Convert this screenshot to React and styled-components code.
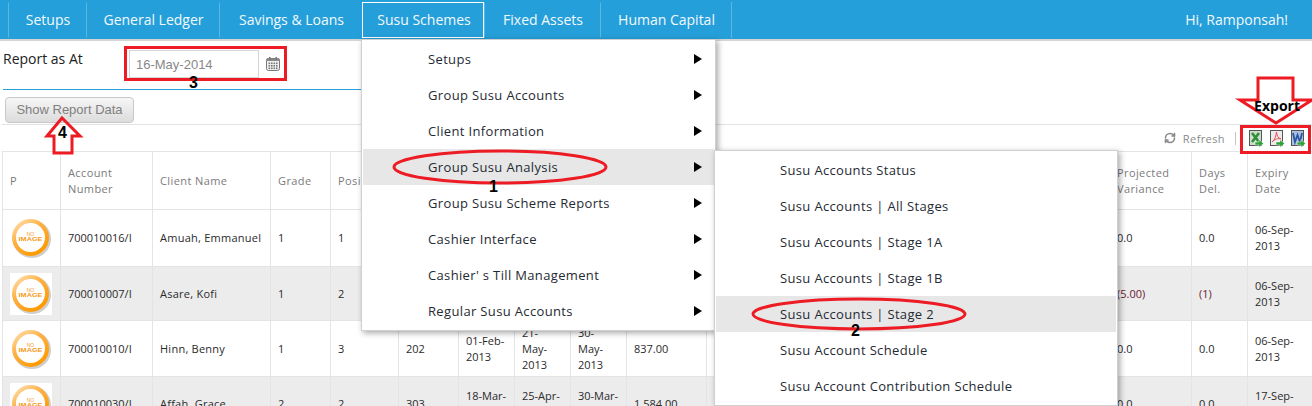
// Susu report page with the scheme menu open and red annotations on top
import React from "react";
import styled, { createGlobalStyle } from "styled-components";
import { RefreshCw } from "lucide-react";

const GlobalStyle = createGlobalStyle`
    html, body {
        margin: 0;
        padding: 0;
        background: #fff;
        overflow: hidden;
    }
    body {
        font-family: "Open Sans", "Liberation Sans", sans-serif;
    }
`;

const Page = styled.div`
    position: relative;
    width: 1312px;
    height: 406px;
    overflow: hidden;
`;

const TopBar = styled.div`
    height: 39px;
    padding-left: 8px;
    background: #259fda;
    border-bottom: 2px solid #d4d4d4;
    display: flex;
    align-items: center;
    justify-content: space-between;
    color: #f2f9fd;
    font-size: 14px;
    font-weight: 500;
`;

const NavList = styled.div`
    display: flex;
    height: 36px;
    border-right: 1px solid #5cb6e3;
`;

const NavItem = styled.div`
    box-sizing: border-box;
    width: ${(p) => p.$width}px;
    padding-left: 2px;
    display: flex;
    align-items: center;
    justify-content: center;
    border-left: 1px solid ${(p) => (p.$active ? "#fff" : "#5cb6e3")};
    border-top: 1px solid ${(p) => (p.$active ? "#fff" : "transparent")};
    border-bottom: 1px solid ${(p) => (p.$active ? "#fff" : "transparent")};
    border-right: 1px solid ${(p) => (p.$active ? "#fff" : "transparent")};
`;

const Greeting = styled.div`
    margin-right: 24px;
`;

const FilterRow = styled.div`
    height: 48px;
    padding-left: 3px;
    display: flex;
    color: #222;
    font-size: 14px;
`;

const FilterLabel = styled.div`
    width: 126px;
    padding-top: 8px;
`;

const DateBox = styled.div`
    display: flex;
    align-items: center;
    gap: 6px;
    height: 28px;
    margin-top: 9px;
`;

const DateInput = styled.div`
    box-sizing: border-box;
    width: 130px;
    height: 28px;
    padding: 2px 0 0 6px;
    border: 1px solid #d5d5d5;
    color: #888;
    font-family: "Liberation Sans", sans-serif;
    font-size: 13px;
    line-height: 24px;
`;

const Divider = styled.div`
    width: 360px;
    height: 1px;
    margin-left: 3px;
    background: #259fda;
`;

const ActionRow = styled.div`
    height: 34px;
    padding: 7px 12px 0 5px;
    box-sizing: border-box;
    display: flex;
    justify-content: space-between;
`;

const ReportButton = styled.div`
    box-sizing: border-box;
    width: 129px;
    height: 26px;
    border: 1px solid #c8c8c8;
    border-radius: 4px;
    background: linear-gradient(#f6f6f6, #dcdcdc);
    color: #808080;
    font-family: "Liberation Sans", sans-serif;
    font-size: 13px;
    line-height: 24px;
    text-align: center;
`;

const ExportLabel = styled.div`
    position: relative;
    z-index: 4;
    color: #000;
    font-size: 14px;
    font-weight: 700;
    line-height: 18px;
`;

const GridToolbar = styled.div`
    box-sizing: border-box;
    height: 27px;
    margin-left: 2px;
    padding-right: 6px;
    border-top: 1px solid #e2e2e2;
    display: flex;
    align-items: center;
    justify-content: flex-end;
    color: #8a8a8a;
    font-size: 11px;
`;

const RefreshText = styled.span`
    margin-left: 7px;
    letter-spacing: 0.4px;
`;

const ToolbarBar = styled.span`
    width: 1px;
    height: 13px;
    margin: 0 13px 0 10px;
    background: #c5c5c5;
`;

const ExportIcons = styled.div`
    display: flex;
    gap: 6px;
    padding-top: 2px;
`;

const GridTable = styled.table`
    width: 1310px;
    margin-left: 2px;
    table-layout: fixed;
    border-collapse: collapse;
    font-size: 11px;
`;

const HeadCell = styled.th`
    height: 57px;
    padding: 0 6px 0 7px;
    border: 1px solid #e4e4e4;
    color: #7b7b7b;
    font-weight: 400;
    letter-spacing: 0.4px;
    line-height: 16px;
    text-align: left;
`;

const Row = styled.tr`
    height: ${(p) => p.$height}px;
    background: ${(p) => (p.$striped ? "#ececec" : "#fff")};
`;

const Cell = styled.td`
    padding: 0 6px 0 7px;
    border-left: 1px solid #e4e4e4;
    border-right: 1px solid #e4e4e4;
    border-bottom: 1px solid #e4e4e4;
    color: ${(p) => (p.$negative ? "#6b2030" : "#2a2a2a")};
    letter-spacing: ${(p) => (p.$name ? "0.25px" : "0")};
    white-space: ${(p) => (p.$name ? "nowrap" : "pre-line")};
    line-height: 16px;
    overflow: hidden;
`;

const Menu = styled.div`
    position: absolute;
    z-index: 2;
    left: ${(p) => p.$left}px;
    top: ${(p) => p.$top}px;
    box-sizing: border-box;
    width: ${(p) => p.$width}px;
    padding: 1px;
    background: #fff;
    border: 1px solid #d0d0d0;
    box-shadow: 2px 2px 6px rgba(0, 0, 0, 0.35);
`;

const MenuItem = styled.div`
    position: relative;
    box-sizing: border-box;
    height: 36px;
    padding-left: ${(p) => p.$indent}px;
    display: flex;
    align-items: center;
    background: ${(p) => (p.$selected ? "#e7e7e7" : "transparent")};
    color: #1f2a33;
    font-size: 13px;
    letter-spacing: 0.35px;
`;

const MenuArrow = styled.span`
    position: absolute;
    right: 12px;
    width: 0;
    height: 0;
    border-left: 8px solid #000;
    border-top: 5px solid transparent;
    border-bottom: 5px solid transparent;
`;

const Annotations = styled.svg`
    position: absolute;
    z-index: 3;
    left: 0;
    top: 0;
`;

const StepNumber = styled.span`
    position: absolute;
    z-index: 4;
    left: ${(p) => p.$x}px;
    top: ${(p) => p.$y}px;
    color: #000;
    font-family: "Liberation Sans", sans-serif;
    font-size: 16px;
    font-weight: 700;
    line-height: 16px;
`;

const navItems = [
    { label: "Setups", width: 78 },
    { label: "General Ledger", width: 133 },
    { label: "Savings & Loans", width: 143 },
    { label: "Susu Schemes", width: 122, active: true },
    { label: "Fixed Assets", width: 116 },
    { label: "Human Capital", width: 131 },
];

const columnWidths = [58, 92, 118, 60, 68, 60, 56, 56, 56, 80, 403, 82, 56, 65];

const headers = ["P", "Account Number", "Client Name", "Grade", "Position", "", "", "", "", "", "", "Projected Variance", "Days Del.", "Expiry Date"];

const rows = [
    { height: 57, account: "700010016/I", name: "Amuah, Emmanuel", grade: 1, position: 1, group: "", start: "", mid: "", end: "", amount: "", variance: "0.0", days: "0.0", expiry: "06-Sep-2013" },
    { height: 54, account: "700010007/I", name: "Asare, Kofi", grade: 1, position: 2, group: "", start: "", mid: "", end: "", amount: "", variance: "(5.00)", days: "(1)", expiry: "06-Sep-2013", negative: true },
    { height: 56, account: "700010010/I", name: "Hinn, Benny", grade: 1, position: 3, group: "202", start: "01-Feb-2013", mid: "21-\nMay-\n2013", end: "30-\nMay-\n2013", amount: "837.00", variance: "0.0", days: "0.0", expiry: "06-Sep-2013" },
    { height: 54, account: "700010030/I", name: "Affah, Grace", grade: 2, position: 2, group: "303", start: "18-Mar-2013", mid: "25-Apr-2013", end: "30-Mar-2013", amount: "1,584.00", variance: "0.0", days: "0.0", expiry: "17-Sep-2013" },
];

const mainMenu = ["Setups", "Group Susu Accounts", "Client Information", "Group Susu Analysis", "Group Susu Scheme Reports", "Cashier Interface", "Cashier' s Till Management", "Regular Susu Accounts"];

const subMenu = ["Susu Accounts Status", "Susu Accounts | All Stages", "Susu Accounts | Stage 1A", "Susu Accounts | Stage 1B", "Susu Accounts | Stage 2", "Susu Account Schedule", "Susu Account Contribution Schedule"];

function CalendarIcon() {
    return (
        <svg width="16" height="16" viewBox="0 0 16 16">
            <rect x="1.5" y="2.5" width="13" height="12" rx="2" fill="#f2f2f2" stroke="#777" />
            <rect x="1.5" y="2.5" width="13" height="2.5" fill="#888" />
            <rect x="4" y="1" width="1.5" height="2.5" fill="#777" />
            <rect x="10.5" y="1" width="1.5" height="2.5" fill="#777" />
            {[6.5, 9, 11.5].map((y) =>
                [3.5, 6, 8.5, 11].map((x) => <rect key={`${x}-${y}`} x={x} y={y} width="1.6" height="1.6" fill="#777" />)
            )}
        </svg>
    );
}

// 사진이 없는 고객에게 보여주는 주황색 링
function NoImage({ id }) {
    return (
        <svg width="42" height="42" viewBox="0 0 42 42" style={{ display: "block", background: "#fff" }}>
            <defs>
                <linearGradient id={id} x1="0" y1="0" x2="0.7" y2="1">
                    <stop offset="0" stopColor="#ffe0b0" />
                    <stop offset="0.45" stopColor="#fdb044" />
                    <stop offset="1" stopColor="#ff9a00" />
                </linearGradient>
            </defs>
            <circle cx="22" cy="22" r="17.5" fill="none" stroke="#cfcfcf" strokeWidth="3" />
            <circle cx="20.5" cy="20.5" r="16.5" fill="#fff" stroke={`url(#${id})`} strokeWidth="4" />
            <text x="20.5" y="18.5" textAnchor="middle" fontSize="5" fontFamily="Liberation Sans" fill="#f5a030">NO</text>
            <text x="20.5" y="24" textAnchor="middle" fontSize="5" fontWeight="700" fontFamily="Liberation Sans" fill="#f59a20" textLength="24" lengthAdjust="spacingAndGlyphs">IMAGE</text>
        </svg>
    );
}

function ExportIcon({ paper, color, children }) {
    return (
        <svg width="15" height="18" viewBox="0 0 15 18">
            <rect x="0.5" y="0.5" width="12" height="15" fill={paper} stroke="#555" />
            <g fill="none" stroke={color} strokeWidth="2">
                {children}
            </g>
            <path d="M6 12 h4 v-2.5 l4.5 4 -4.5 4 v-2.5 h-4 z" fill="#2fa13a" stroke="#fff" strokeWidth="0.5" />
        </svg>
    );
}

function App() {
    return (
        <Page>
            <GlobalStyle />
            <TopBar>
                <NavList>
                    {navItems.map((item) => (
                        <NavItem key={item.label} $width={item.width} $active={item.active}>
                            {item.label}
                        </NavItem>
                    ))}
                </NavList>
                <Greeting>Hi, Ramponsah!</Greeting>
            </TopBar>

            <FilterRow>
                <FilterLabel>Report as At</FilterLabel>
                <DateBox>
                    <DateInput>16-May-2014</DateInput>
                    <CalendarIcon />
                </DateBox>
            </FilterRow>
            <Divider />
            <ActionRow>
                <ReportButton>Show Report Data</ReportButton>
                <ExportLabel>Export</ExportLabel>
            </ActionRow>

            <GridToolbar>
                <RefreshCw size={12} strokeWidth={3.2} color="#8a8a8a" />
                <RefreshText>Refresh</RefreshText>
                <ToolbarBar />
                <ExportIcons>
                    <ExportIcon paper="#cfdccb" color="#2f8f3a">
                        <path strokeWidth="2.6" d="M3 3 L10 12 M10 3 L3 12" />
                    </ExportIcon>
                    <ExportIcon paper="#eeeaea" color="#e2505a">
                        <path strokeWidth="1" d="M6.5 2 C6 6 5 10 2 12 C5 9 8 8 11 9 C8 8 7 6 6.5 2" />
                    </ExportIcon>
                    <ExportIcon paper="#a9c0de" color="#2b55a5">
                        <path strokeWidth="1.8" d="M2 3 L4 12 L6.5 5 L9 12 L11 3" />
                    </ExportIcon>
                </ExportIcons>
            </GridToolbar>

            <GridTable>
                <colgroup>
                    {columnWidths.map((width, index) => (
                        <col key={index} style={{ width }} />
                    ))}
                </colgroup>
                <thead>
                    <tr>
                        {headers.map((title, index) => (
                            <HeadCell key={index}>{title}</HeadCell>
                        ))}
                    </tr>
                </thead>
                <tbody>
                    {rows.map((row, index) => (
                        <Row key={row.account} $height={row.height} $striped={index % 2 === 1}>
                            <Cell>
                                <NoImage id={`ring-${index}`} />
                            </Cell>
                            <Cell>{row.account}</Cell>
                            <Cell $name>{row.name}</Cell>
                            <Cell>{row.grade}</Cell>
                            <Cell>{row.position}</Cell>
                            <Cell>{row.group}</Cell>
                            <Cell>{row.start}</Cell>
                            <Cell>{row.mid}</Cell>
                            <Cell>{row.end}</Cell>
                            <Cell>{row.amount}</Cell>
                            <Cell />
                            <Cell $negative={row.negative}>{row.variance}</Cell>
                            <Cell $negative={row.negative}>{row.days}</Cell>
                            <Cell>{row.expiry}</Cell>
                        </Row>
                    ))}
                </tbody>
            </GridTable>

            <Menu $left={361} $top={39} $width={355}>
                {mainMenu.map((label) => (
                    <MenuItem key={label} $indent={65} $selected={label === "Group Susu Analysis"}>
                        {label}
                        <MenuArrow />
                    </MenuItem>
                ))}
            </Menu>
            <Menu $left={714} $top={150} $width={404}>
                {subMenu.map((label) => (
                    <MenuItem key={label} $indent={64} $selected={label === "Susu Accounts | Stage 2"}>
                        {label}
                    </MenuItem>
                ))}
            </Menu>

            <Annotations width="1312" height="406" viewBox="0 0 1312 406" fill="none" stroke="#ed1c24" strokeWidth="3">
                <rect x="125.5" y="47.5" width="160" height="32" />
                <path d="M62 118 L47 136 H54 V153 H72 V136 H80 Z" />
                <ellipse cx="500" cy="167" rx="106" ry="16" />
                <ellipse cx="859" cy="314" rx="106" ry="15" />
                <path d="M1258 78 H1293 V100 H1312 L1276 123 L1240 100 H1258 Z" />
                <rect x="1241.5" y="126.5" width="68" height="26" />
            </Annotations>
            <StepNumber $x={189} $y={75}>3</StepNumber>
            <StepNumber $x={58} $y={125}>4</StepNumber>
            <StepNumber $x={489} $y={179}>1</StepNumber>
            <StepNumber $x={851} $y={323}>2</StepNumber>
        </Page>
    );
}

export default App;
